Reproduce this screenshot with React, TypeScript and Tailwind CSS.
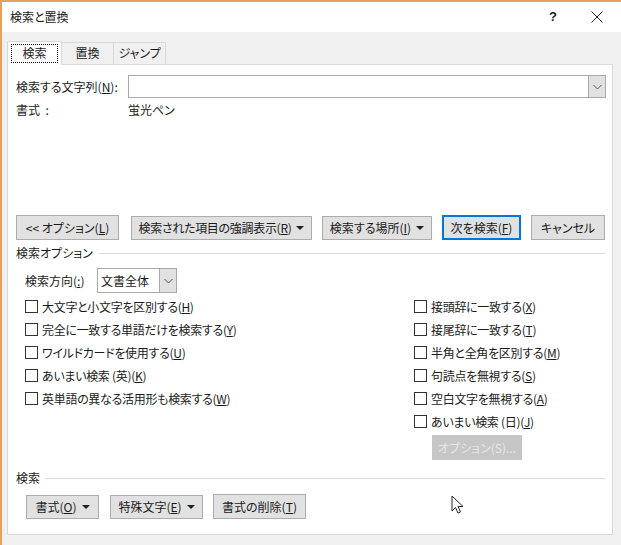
import type { ReactNode } from "react";

const leftOptions: [string, string, string][] = [
  ["大文字と小文字を区別する(", "H", ")"],
  ["完全に一致する単語だけを検索する(", "Y", ")"],
  ["ワイルドカードを使用する(", "U", ")"],
  ["あいまい検索 (英)(", "K", ")"],
  ["英単語の異なる活用形も検索する(", "W", ")"],
];

const rightOptions: [string, string, string][] = [
  ["接頭辞に一致する(", "X", ")"],
  ["接尾辞に一致する(", "T", ")"],
  ["半角と全角を区別する(", "M", ")"],
  ["句読点を無視する(", "S", ")"],
  ["空白文字を無視する(", "A", ")"],
  ["あいまい検索 (日)(", "J", ")"],
];

function Caret() {
  return <span className="ml-[5px] inline-block h-0 w-0 border-x-[4px] border-t-[4px] border-x-transparent border-t-[#222]" />;
}

function Chevron() {
  return (
    <svg width="9" height="6" viewBox="0 0 9 6" fill="none" stroke="#555" strokeWidth="1">
      <path d="M0.5 1L4.5 5L8.5 1" />
    </svg>
  );
}

function Button({ className, children }: { className: string; children: ReactNode }) {
  return (
    <div className={`flex shrink-0 items-center justify-center bg-[#e1e1e1] ${className}`}>
      {children}
    </div>
  );
}

function CheckRow({ label }: { label: [string, string, string] }) {
  return (
    <div className="flex h-[23px] items-center">
      <span className="h-[13px] w-[13px] shrink-0 border border-[#333] bg-white" />
      <span className="ml-[4px] whitespace-pre tracking-[-0.3px]">
        {label[0]}
        <u>{label[1]}</u>
        {label[2]}
      </span>
    </div>
  );
}

function SectionTitle({ title }: { title: string }) {
  return (
    <div className="flex h-[18px] items-center">
      <span>{title}</span>
      <span className="ml-[5px] h-px flex-1 bg-[#dcdcdc]" />
    </div>
  );
}

export default function App() {
  return (
    <div className="relative h-[545px] w-[621px] overflow-hidden border-l-2 border-t-2 border-[#e8a05c] bg-[#f0f0f0] font-['Noto_Sans_CJK_JP','Noto_Sans',sans-serif] text-[12px] leading-[18px] text-[#1a1a1a] [font-feature-settings:'palt']">
      {/* title bar */}
      <div className="flex h-[30px] items-center bg-white pl-[8px] pr-[18px]">
        <span className="flex-1">検索と置換</span>
        <span className="mr-[34px] font-['Liberation_Sans',sans-serif] text-[13px] font-bold">?</span>
        <svg width="12" height="12" viewBox="0 0 12 12" stroke="#222" strokeWidth="1">
          <path d="M0.5 0.5L11.5 11.5M11.5 0.5L0.5 11.5" />
        </svg>
      </div>

      {/* tabs */}
      <div className="ml-[5px] mt-[9px] flex h-[23px] items-end">
        <div className="relative z-10 -mb-px flex h-[24px] w-[55px] items-center justify-center border border-b-0 border-[#d9d9d9] bg-white pb-[1px]">
          <span className="flex h-[19px] w-[47px] items-center justify-center border border-dotted border-black">検索</span>
        </div>
        <div className="flex h-[22px] w-[52px] items-center justify-center border border-l-0 border-b-0 border-[#d9d9d9] pb-[2px]">置換</div>
        <div className="flex h-[22px] w-[52px] items-center justify-center border border-l-0 border-b-0 border-[#d9d9d9] pb-[2px]">ジャンプ</div>
      </div>

      {/* panel */}
      <div className="ml-[5px] flex h-[471px] w-[606px] flex-col border border-[#d9d9d9] bg-white pl-[8px] pr-[6px]">
        <div className="mt-[10px] flex h-[23px] items-center">
          <span className="w-[112px]">
            検索する文字列(<u>N</u>):
          </span>
          <div className="flex h-[23px] flex-1 items-stretch justify-end border border-[#a9a9a9]">
            <div className="flex w-[17px] items-center justify-center border-l border-[#a9a9a9] bg-[#e1e1e1]">
              <Chevron />
            </div>
          </div>
        </div>
        <div className="flex h-[23px] items-center">
          <span className="w-[112px] whitespace-pre">書式  :</span>
          <span>蛍光ペン</span>
        </div>

        <div className="mt-[94px] flex items-center">
          <Button className="h-[25px] w-[103px] border border-[#adadad]">
            {"<<  オプション("}
            <u>L</u>)
          </Button>
          <Button className="ml-[12px] h-[24px] w-[181px] border border-[#adadad] tracking-[-0.3px]">
            検索された項目の強調表示(<u>R</u>)
            <Caret />
          </Button>
          <Button className="ml-[10px] h-[24px] w-[110px] border border-[#adadad]">
            検索する場所(<u>I</u>)
            <Caret />
          </Button>
          <Button className="ml-[10px] h-[25px] w-[79px] border-2 border-[#0078d7]">
            次を検索(<u>F</u>)
          </Button>
          <Button className="ml-[10px] h-[25px] w-[74px] border border-[#adadad]">キャンセル</Button>
        </div>

        <div className="mt-[4px]">
          <SectionTitle title="検索オプション" />
        </div>

        <div className="ml-[9px] mt-[6px] flex h-[25px] items-center">
          <span className="w-[72px]">
            検索方向(<u>:</u>)
          </span>
          <div className="flex h-[25px] w-[80px] items-stretch border border-[#a9a9a9]">
            <span className="flex flex-1 items-center pl-[3px]">文書全体</span>
            <div className="flex w-[17px] items-center justify-center border-l border-[#a9a9a9] bg-[#e1e1e1]">
              <Chevron />
            </div>
          </div>
        </div>

        <div className="ml-[9px] mt-[2px] flex h-[170px]">
          <div className="w-[389px]">
            {leftOptions.map((o) => (
              <CheckRow key={o[1]} label={o} />
            ))}
          </div>
          <div className="flex-1">
            {rightOptions.map((o) => (
              <CheckRow key={o[1]} label={o} />
            ))}
            <div className="ml-[18px] mt-[2px] flex h-[25px] w-[90px] items-center justify-center bg-[#c6c6c6] text-[#e6e6e6]">
              オプション(S)...
            </div>
          </div>
        </div>

        <div className="mt-[4px]">
          <SectionTitle title="検索" />
        </div>

        <div className="ml-[10px] mt-[7px] flex items-end">
          <Button className="h-[24px] w-[73px] border border-[#adadad]">
            書式(<u>O</u>)
            <Caret />
          </Button>
          <Button className="ml-[11px] h-[24px] w-[93px] border border-[#adadad]">
            特殊文字(<u>E</u>)
            <Caret />
          </Button>
          <Button className="ml-[10px] h-[25px] w-[93px] border border-[#adadad]">
            書式の削除(<u>T</u>)
          </Button>
        </div>
      </div>

      {/* mouse cursor */}
      <svg className="absolute left-[449px] top-[493px]" width="14" height="20" viewBox="0 0 14 20" fill="white" stroke="#222" strokeWidth="1">
        <path d="M1 1V16L4.5 12.5L7 18L9.5 17L7 11.5H12Z" />
      </svg>
    </div>
  );
}
